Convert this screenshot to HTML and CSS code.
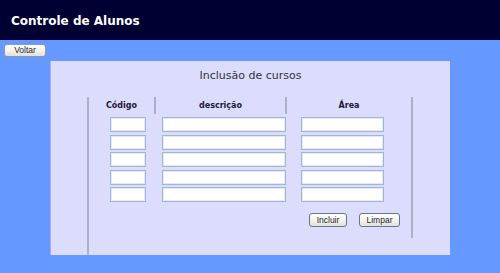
FILE: index.html
```html
<!DOCTYPE html>
<html lang="pt-BR">
<head>
  <meta charset="UTF-8" />
  <title>Controle de Alunos</title>
  <link rel="stylesheet" href="styles.css">
</head>
<body>
  <div class="topo">Controle de Alunos</div>
  <button class="botao voltar" type="button">Voltar</button>

  <div class="quadro">
    <div class="titulo">Inclusão de cursos</div>
    <div class="moldura">
      <form class="grade">
        <div class="cabecalho">
          <div class="col col-codigo">Código</div>
          <div class="col col-desc">descrição</div>
          <div class="col col-area">Área</div>
        </div>

        <div class="linhas">
          <input type="text" class="campo">
          <input type="text" class="campo">
          <input type="text" class="campo">
          <input type="text" class="campo">
          <input type="text" class="campo">
          <input type="text" class="campo">
          <input type="text" class="campo">
          <input type="text" class="campo">
          <input type="text" class="campo">
          <input type="text" class="campo">
          <input type="text" class="campo">
          <input type="text" class="campo">
          <input type="text" class="campo">
          <input type="text" class="campo">
          <input type="text" class="campo">
        </div>

        <div class="acoes">
          <button class="botao incluir" type="submit">Incluir</button>
          <button class="botao limpar" type="reset">Limpar</button>
        </div>
      </form>
    </div>
  </div>
</body>
</html>
```

FILE: styles.css
```css
body {
  margin: 0;
  background-color: #6699ff;
  font-family: "DejaVu Sans", Verdana, sans-serif;
  color: #1a1a33;
}
.topo {
  height: 40px;
  box-sizing: border-box;
  padding: 14px 0 0 11px;
  background-color: #000033;
  color: #ffffff;
  font-size: 12px;
  font-weight: bold;
  line-height: 14px;
}
.botao {
  display: block;
  box-sizing: border-box;
  height: 14px;
  padding: 0;
  font-family: "Liberation Sans", Arial, sans-serif;
  font-size: 8.5px;
  line-height: 11px;
  color: #2a2236;
  background: linear-gradient(#ffffff, #f2f1ea 60%, #e2e0d6);
  border: 1px solid #5f7896;
  border-radius: 3px;
}
.voltar {
  width: 42px;
  height: 13px;
  margin: 4px 0 4px 4px;
  border-color: #8a98b0;
}
.quadro {
  display: flex;
  flex-direction: column;
  box-sizing: border-box;
  width: 400px;
  height: 194px;
  margin-left: 50px;
  background-color: #dcdcfd;
  border-left: 1px solid #a9aedb;
}
.titulo {
  padding-top: 8px;
  height: 13px;
  margin-bottom: 15px;
  text-align: center;
  font-size: 11px;
  line-height: 13px;
  color: #333340;
}
.moldura {
  flex: 1;
  margin-left: 36px;
  border-left: 2px solid #aeaec4;
}
.grade {
  box-sizing: border-box;
  width: 324px;
  height: 141px;
  margin: 0;
  border-right: 2px solid #aeaec4;
}
.cabecalho {
  display: flex;
  height: 17px;
  font-size: 8px;
  font-weight: bold;
  line-height: 17px;
  text-align: center;
}
.col-codigo {
  width: 65px;
  border-right: 2px solid #aeaec4;
}
.col-desc {
  width: 129px;
  border-right: 2px solid #aeaec4;
}
.col-area {
  flex: 1;
}
.linhas {
  display: grid;
  grid-template-columns: 36px 124px 83px;
  column-gap: 15.5px;
  row-gap: 2.5px;
  margin-top: 3px;
  padding-left: 21px;
}
.campo {
  box-sizing: border-box;
  width: 100%;
  height: 15px;
  margin: 0;
  padding: 0 2px;
  background-color: #ffffff;
  border: 1px solid #a2b5d3;
  box-shadow: inset 0 0 0 1px #e4eaf3;
}
.acoes {
  display: flex;
  justify-content: flex-end;
  gap: 12px;
  margin-top: 11px;
  padding-right: 11px;
}
.incluir {
  width: 38px;
}
.limpar {
  width: 41px;
}
```
